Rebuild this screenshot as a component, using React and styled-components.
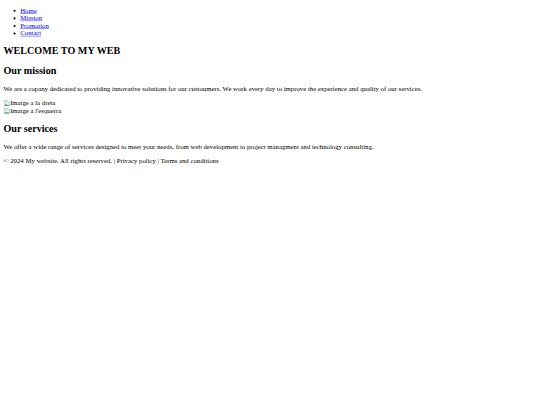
import React from "react";
import styled, { createGlobalStyle } from "styled-components";

const GlobalStyle = createGlobalStyle`
  html, body {
    margin: 0;
    background: #fff;
    overflow: hidden;
  }
  body {
    font-family: "Liberation Serif", "Times New Roman", serif;
    font-size: 16px;
    color: #000;
  }
`;

// the page is drawn at 1280px wide and shown scaled down to the 540px frame
const Page = styled.div`
  display: flow-root;
  width: 1280px;
  transform: scale(0.421875);
  transform-origin: 0 0;
`;

const Body = styled.div`
  margin: 8px;
`;

const NavList = styled.ul`
  margin: 16px 0;
  padding-left: 40px;
  list-style: disc;
`;

const NavLink = styled.a`
  color: #0000ee;
  text-decoration: underline;
`;

const Title = styled.h1`
  font-size: 1.5em;
  font-weight: bold;
  margin: 0.83em 0;
`;

const SectionTitle = styled.h2`
  font-size: 1.5em;
  font-weight: bold;
  margin: 0.83em 0;
`;

const Text = styled.p`
  margin: 16px 0;
`;

const Picture = styled.span`
  display: block;
  white-space: nowrap;
`;

const BrokenIcon = styled.svg`
  width: 16px;
  height: 16px;
  vertical-align: -3px;
`;

const Footer = styled.footer`
  margin: 0;
`;

const Img = ({ alt }) => (
  <Picture>
    <BrokenIcon viewBox="0 0 16 16">
      <path d="M1.5 1.5h9l4 4v9h-13z" fill="#eef4fb" stroke="#8a9aa8" />
      <path d="M10.5 1.5v4h4" fill="#fff" stroke="#8a9aa8" />
      <path d="M2 14l4-5 3 3 2-2 3 4z" fill="#5cab4a" />
      <circle cx="5" cy="5" r="1.4" fill="#7db3e0" />
    </BrokenIcon>
    {alt}
  </Picture>
);

const links = ["Home", "Mission", "Promotion", "Contact"];

export default function App() {
  return (
    <>
      <GlobalStyle />
      <Page>
        <Body>
          <header>
            <nav>
              <NavList>
                {links.map((l) => (
                  <li key={l}>
                    <NavLink href="#">{l}</NavLink>
                  </li>
                ))}
              </NavList>
            </nav>
          </header>
          <main>
            <Title>WELCOME TO MY WEB</Title>
            <section>
              <SectionTitle>Our mission</SectionTitle>
              <Text>
                We are a copany dedicated to providing innovative solutions for
                our custoumers. We work every day to improve the experience and
                quality of our services.
              </Text>
              <Img alt="Imatge a la dreta" />
              <Img alt="Imatge a l'esquerra" />
            </section>
            <section>
              <SectionTitle>Our services</SectionTitle>
              <Text>
                We offer a wide range of services designed to meet your needs,
                from web development to project managment and technology
                consulting.
              </Text>
            </section>
          </main>
          <Footer>
            © 2024 My website. All rights reserved. | Privacy policy | Terms
            and conditions
          </Footer>
        </Body>
      </Page>
    </>
  );
}
